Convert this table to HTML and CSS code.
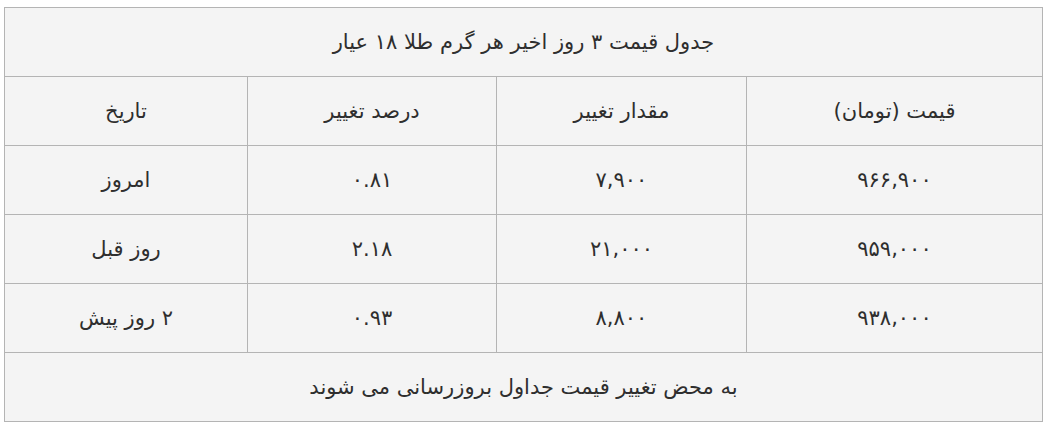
FILE: index.html
```html
<!DOCTYPE html>
<html lang="fa" dir="rtl">
<head>
<meta charset="utf-8">
<link rel="stylesheet" href="styles.css">
</head>
<body>
<div class="wrap">
<table class="price-table">
  <colgroup>
    <col class="c1"><col class="c2"><col class="c3"><col class="c4">
  </colgroup>
  <tr><td colspan="4">جدول قیمت ۳ روز اخیر هر گرم طلا ۱۸ عیار</td></tr>
  <tr><td>قیمت (تومان)</td><td>مقدار تغییر</td><td>درصد تغییر</td><td>تاریخ</td></tr>
  <tr><td>۹۶۶,۹۰۰</td><td>۷,۹۰۰</td><td>۰.۸۱</td><td>امروز</td></tr>
  <tr><td>۹۵۹,۰۰۰</td><td>۲۱,۰۰۰</td><td>۲.۱۸</td><td>روز قبل</td></tr>
  <tr><td>۹۳۸,۰۰۰</td><td>۸,۸۰۰</td><td>۰.۹۳</td><td>۲ روز پیش</td></tr>
  <tr><td colspan="4">به محض تغییر قیمت جداول بروزرسانی می شوند</td></tr>
</table>
</div>
</body>
</html>
```
FILE: styles.css
```css
html, body {
  margin: 0;
  background: #ffffff;
}
.wrap {
  padding: 7px 1px 0 5px;
}
.price-table {
  width: 1038px;
  border-collapse: collapse;
  table-layout: fixed;
  background: #f4f4f4;
  font-family: "DejaVu Sans", sans-serif;
  font-size: 21px;
  color: #2e2e2e;
}
.c1 { width: 296px; }
.c2 { width: 250px; }
.c3 { width: 249px; }
.c4 { width: 243px; }
.price-table td {
  border: 1px solid #b4b4b4;
  height: 68px;
  padding: 0;
  text-align: center;
  vertical-align: middle;
}
```
